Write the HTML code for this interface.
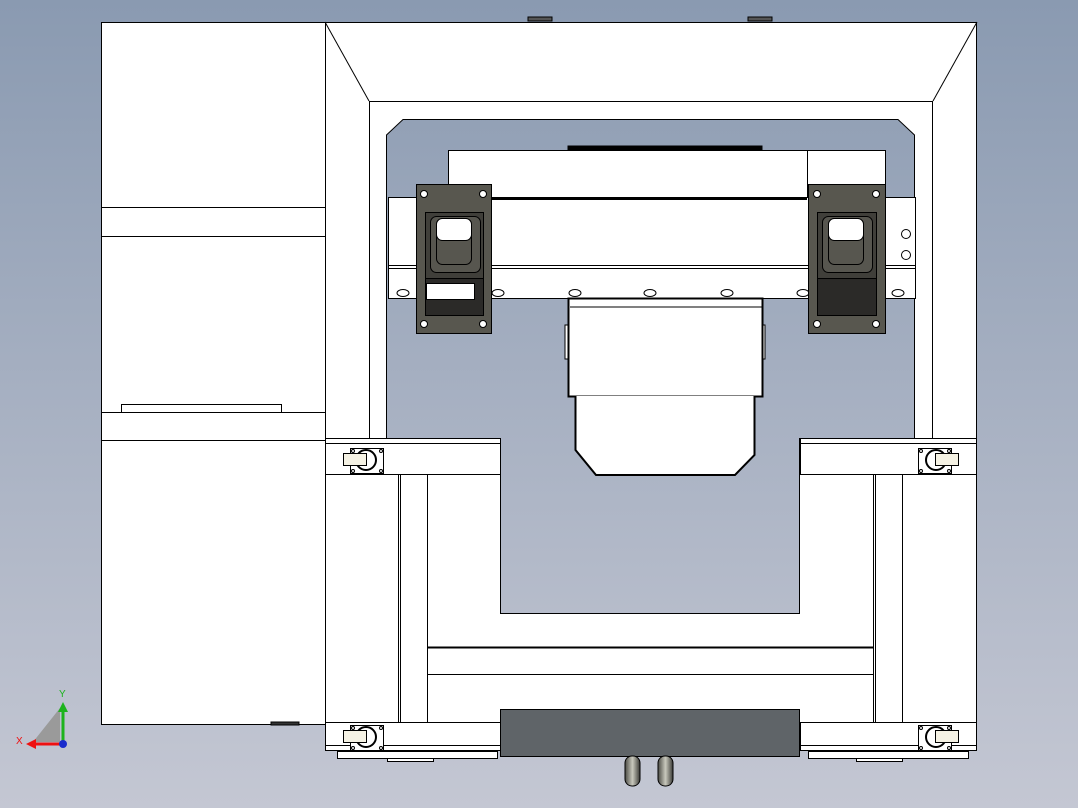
<!DOCTYPE html>
<html><head><style>html,body{margin:0;padding:0;width:1078px;height:808px;overflow:hidden}</style></head><body>
<svg width="1078" height="808" viewBox="0 0 1078 808" xmlns="http://www.w3.org/2000/svg" font-family="Liberation Sans, sans-serif">
<defs>
<linearGradient id="bg" gradientUnits="userSpaceOnUse" x1="0" y1="0" x2="0" y2="808"><stop offset="0" stop-color="#8a9ab1"/><stop offset="1" stop-color="#c4c7d3"/></linearGradient>
<linearGradient id="peg" x1="0" y1="0" x2="1" y2="0"><stop offset="0" stop-color="#4a4a44"/><stop offset="0.5" stop-color="#c9c9bd"/><stop offset="1" stop-color="#3a3a36"/></linearGradient>
</defs>
<rect width="1078" height="808" fill="url(#bg)"/>
<g stroke="#000" stroke-width="1" fill="#fff">
<rect x="101.5" y="22.5" width="224" height="702"/>
<line x1="101" y1="207.5" x2="325" y2="207.5"/><line x1="101" y1="236.5" x2="325" y2="236.5"/>
<rect x="121.5" y="404.5" width="160" height="8"/>
<line x1="101" y1="412.5" x2="325" y2="412.5"/><line x1="101" y1="440.5" x2="325" y2="440.5"/>
<rect x="271" y="722" width="28" height="3" fill="#333"/>
<rect x="325.5" y="22.5" width="651" height="722"/>
<line x1="325" y1="22" x2="369" y2="101"/><line x1="977" y1="22" x2="933" y2="101"/>
<rect x="369.5" y="101.5" width="563" height="337"/>
<rect x="528" y="17" width="24" height="4" fill="#555"/><rect x="748" y="17" width="24" height="4" fill="#555"/>
<path d="M386.5 438 V135 L403 119.5 H898 L914.5 135 V438" fill="url(#bg)"/>
<!-- lower frame base -->
<rect x="500.5" y="438" width="299" height="175" fill="url(#bg)" stroke="none"/>
<path d="M500.5 438 V613.5 H799.5 V438" fill="none"/>
<rect x="448.5" y="150.5" width="359" height="47"/>
<rect x="568" y="146" width="194" height="4" fill="#000"/>
<rect x="807.5" y="150.5" width="78" height="35"/>
<rect x="388.5" y="197.5" width="527" height="68"/>
<line x1="448" y1="199" x2="807" y2="199" stroke-width="2"/>
<rect x="388.5" y="265.5" width="527" height="33"/>
<line x1="388" y1="268.5" x2="915" y2="268.5"/>
<g fill="#fff"><ellipse cx="403" cy="293" rx="6" ry="3.5"/><ellipse cx="498" cy="293" rx="6" ry="3.5"/><ellipse cx="575" cy="293" rx="6" ry="3.5"/><ellipse cx="650" cy="293" rx="6" ry="3.5"/><ellipse cx="727" cy="293" rx="6" ry="3.5"/><ellipse cx="803" cy="293" rx="6" ry="3.5"/><ellipse cx="898" cy="293" rx="6" ry="3.5"/>
<circle cx="906" cy="234" r="4.5"/><circle cx="906" cy="255" r="4.5"/></g>
<rect x="565" y="325" width="3" height="34"/><rect x="762" y="325" width="3" height="34"/>
<rect x="568.5" y="298.5" width="194" height="98" stroke-width="2"/>
<line x1="570" y1="307" x2="762" y2="307"/>
<path d="M575.5 396 V450 L596 475 H735 L754.5 455 V396" stroke-width="2"/>
<g>
<rect x="416.5" y="184.5" width="75" height="149" fill="#58574f"/>
<rect x="425.5" y="212.5" width="58" height="103" fill="#403f3a"/>
<rect x="430.5" y="216.5" width="50" height="56" rx="6" fill="#57564f"/>
<rect x="436.5" y="218.5" width="35" height="46" rx="6" fill="#57564f"/>
<rect x="436.5" y="218.5" width="35" height="22" rx="6"/>
<rect x="425.5" y="278.5" width="58" height="37" fill="#2b2a28"/>
<rect x="426.5" y="283.5" width="48" height="16" fill="#fff"/>
<circle cx="424" cy="194" r="3.5" fill="#fff"/><circle cx="483" cy="194" r="3.5" fill="#fff"/><circle cx="424" cy="324" r="3.5" fill="#fff"/><circle cx="483" cy="324" r="3.5" fill="#fff"/>
</g>
<g>
<rect x="808.5" y="184.5" width="77" height="149" fill="#58574f"/>
<rect x="817.5" y="212.5" width="59" height="103" fill="#403f3a"/>
<rect x="822.5" y="216.5" width="50" height="56" rx="6" fill="#57564f"/>
<rect x="828.5" y="218.5" width="35" height="46" rx="6" fill="#57564f"/>
<rect x="828.5" y="218.5" width="35" height="22" rx="6"/>
<rect x="817.5" y="278.5" width="59" height="37" fill="#2b2a28"/>
<circle cx="817" cy="194" r="3.5" fill="#fff"/><circle cx="876" cy="194" r="3.5" fill="#fff"/><circle cx="817" cy="324" r="3.5" fill="#fff"/><circle cx="876" cy="324" r="3.5" fill="#fff"/>
</g>
<rect x="325.5" y="438.5" width="175" height="36"/><line x1="325" y1="443.5" x2="500" y2="443.5"/>
<rect x="800.5" y="438.5" width="176" height="36"/><line x1="800" y1="443.5" x2="977" y2="443.5"/>
<rect x="398.5" y="474.5" width="29" height="250"/><line x1="400.5" y1="474" x2="400.5" y2="724"/>
<rect x="873.5" y="474.5" width="29" height="250"/><line x1="875.5" y1="474" x2="875.5" y2="724"/>
<line x1="427" y1="647.5" x2="873" y2="647.5" stroke-width="2"/>
<line x1="427" y1="674.5" x2="873" y2="674.5"/>
<rect x="325.5" y="722.5" width="175" height="28"/><line x1="325" y1="745.5" x2="500" y2="745.5"/>
<rect x="800.5" y="722.5" width="176" height="28"/><line x1="800" y1="745.5" x2="977" y2="745.5"/>
<rect x="337.5" y="751.5" width="160" height="7"/><rect x="387.5" y="758.5" width="46" height="3"/>
<rect x="808.5" y="751.5" width="160" height="7"/><rect x="856.5" y="758.5" width="46" height="3"/>
<rect x="500.5" y="709.5" width="299" height="47" fill="#5f6468"/>
<rect x="625" y="756" width="15" height="30" rx="7" fill="url(#peg)"/>
<rect x="658" y="756" width="15" height="30" rx="7" fill="url(#peg)"/>
<g id="c"><rect x="350.5" y="448.5" width="33" height="25" fill="#fff"/><circle cx="366" cy="460" r="10" fill="none" stroke-width="2"/><rect x="343.5" y="453.5" width="23" height="12" fill="#f5f2e4"/>
<circle cx="353" cy="451" r="1.5"/><circle cx="381" cy="451" r="1.5"/><circle cx="353" cy="471" r="1.5"/><circle cx="381" cy="471" r="1.5"/></g>
<use href="#c" transform="translate(0,277)"/>
<use href="#c" transform="translate(1302,0) scale(-1,1)"/>
<use href="#c" transform="translate(1302,277) scale(-1,1)"/>
</g>
<path d="M33 742 L60 708 L60 742 Z" fill="#9a9a9a"/>
<line x1="63" y1="744" x2="63" y2="708" stroke="#1db31d" stroke-width="3"/><path d="M58 712 L63 702 L68 712Z" fill="#1db31d"/>
<line x1="63" y1="744" x2="33" y2="744" stroke="#e11" stroke-width="3"/><path d="M36 739 L26 744 L36 749Z" fill="#e11"/>
<circle cx="63" cy="744" r="4" fill="#1a2ccc"/>
<text x="59" y="697" font-size="10" fill="#1db31d">Y</text>
<text x="16" y="744" font-size="10" fill="#e11">X</text>
</svg>
</body></html>
